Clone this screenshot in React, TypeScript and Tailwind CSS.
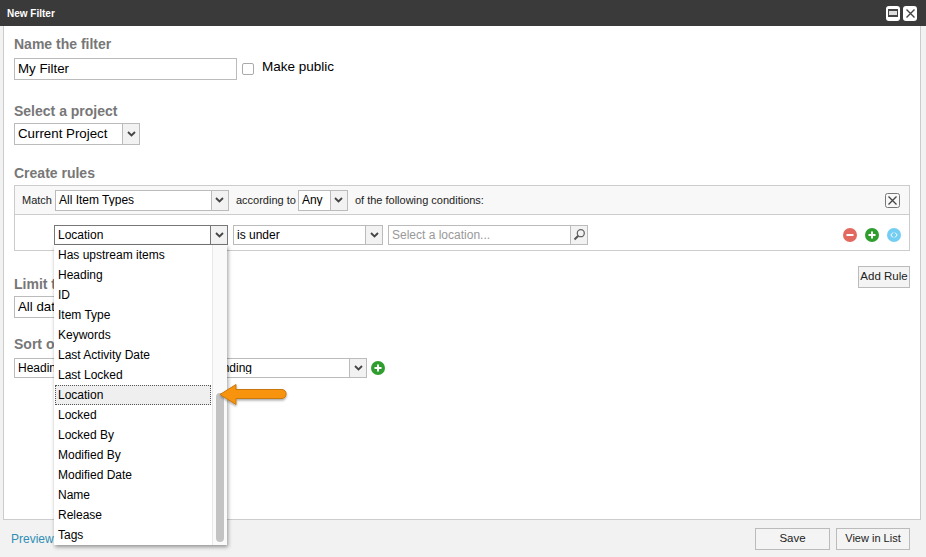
import React from 'react';

const items = [
	'Has upstream items',
	'Heading',
	'ID',
	'Item Type',
	'Keywords',
	'Last Activity Date',
	'Last Locked',
	'Location',
	'Locked',
	'Locked By',
	'Modified By',
	'Modified Date',
	'Name',
	'Release',
	'Tags',
];

function Chevron() {
	return (
		<svg width="9" height="6" viewBox="0 0 9 6">
			<path d="M1 1l3.5 3.5L8 1" fill="none" stroke="#444" strokeWidth="1.8" />
		</svg>
	);
}

function Select({ label, className, textClass = 'text-[12px]', focus = false }: { label: string; className: string; textClass?: string; focus?: boolean }) {
	return (
		<div className={`flex bg-white border ${focus ? 'border-[#777]' : 'border-[#bbb]'} ${className}`}>
			<span className={`flex-1 pl-[3px] text-black leading-none self-center whitespace-nowrap overflow-hidden ${textClass}`}>{label}</span>
			<span className={`w-[17px] flex items-center justify-center bg-[#f2f2f2] border-l ${focus ? 'border-[#777]' : 'border-[#bbb]'}`}>
				<Chevron />
			</span>
		</div>
	);
}

function Heading({ children, className }: { children: React.ReactNode; className: string }) {
	return <div className={`text-[14px] leading-[16px] font-bold text-[#777] ${className}`}>{children}</div>;
}

function RoundIcon({ bg, kind }: { bg: string; kind: 'minus' | 'plus' | 'move' }) {
	return (
		<span className={`w-[14px] h-[14px] rounded-full flex items-center justify-center ${bg}`}>
			<svg width="10" height="10" viewBox="0 0 10 10">
				{kind === 'minus' && <path d="M1.5 5h7" stroke="#fff" strokeWidth="2" />}
				{kind === 'plus' && <path d="M1.5 5h7M5 1.5v7" stroke="#fff" strokeWidth="2" />}
				{kind === 'move' && <path d="M4 2.5L1.8 5 4 7.5M6 2.5L8.2 5 6 7.5" stroke="#fff" strokeWidth="1" fill="none" />}
			</svg>
		</span>
	);
}

export default function App() {
	return (
		<div className="relative w-[926px] h-[557px] overflow-hidden bg-[#f2f2f2] font-['Liberation_Sans',Arial,sans-serif]">
			<div className="h-[26px] bg-[#3a3a3a] flex items-center justify-between pl-[7px] pr-[9px]">
				<span className="text-[10px] font-bold text-white">New Filter</span>
				<div className="flex gap-[3px]">
					<span className="w-[14px] h-[15px] bg-white rounded-[3px] flex items-center justify-center">
						<span className="w-[10px] h-[8px] border border-[#444] border-t-[2px] border-b-[2px] bg-[#ddd]" />
					</span>
					<span className="w-[14px] h-[15px] bg-white rounded-[3px] flex items-center justify-center">
						<svg width="11" height="11" viewBox="0 0 11 11">
							<path d="M1.5 1.5l8 8M9.5 1.5l-8 8" stroke="#444" strokeWidth="1.4" />
						</svg>
					</span>
				</div>
			</div>

			<div className="ml-[3px] mr-[5px] h-[494px] bg-white border border-t-0 border-[#ccc] pl-[10px] pr-[10px] pt-[10px]">
				<Heading className="mb-[5px]">Name the filter</Heading>
				<div className="flex items-center h-[23px]">
					<div className="w-[223px] h-[22px] border border-[#bbb] pl-[3px] flex items-center text-[13.3px] text-black">My Filter</div>
					<span className="ml-[5px] w-[12px] h-[12px] border border-[#aaa] rounded-[2px]" />
					<span className="ml-[8px] text-[13.5px] text-black -mt-[2px]">Make public</span>
				</div>

				<Heading className="mt-[23px] mb-[4px]">Select a project</Heading>
				<Select label="Current Project" className="w-[126px] h-[22px]" textClass="text-[13.3px]" />

				<Heading className="mt-[20px] mb-[4px]">Create rules</Heading>
				<div className="border border-[#ccc]">
					<div className="h-[29px] bg-[#f8f8f8] border-b border-[#ccc] flex items-center pl-[7px] pr-[9px] text-[11px] text-[#222]">
						<span>Match</span>
						<Select label="All Item Types" className="ml-[3px] w-[174px] h-[21px]" textClass="text-[12px]" />
						<span className="ml-[7px]">according to</span>
						<Select label="Any" className="ml-[2px] w-[50px] h-[21px]" textClass="text-[12px]" />
						<span className="ml-[7px]">of the following conditions:</span>
						<svg className="ml-auto" width="15" height="15" viewBox="0 0 15 15">
							<rect x="0.5" y="0.5" width="14" height="14" rx="2" fill="#f8f8f8" stroke="#777" />
							<path d="M3.5 3.5l8 8M11.5 3.5l-8 8" stroke="#444" strokeWidth="1.3" />
						</svg>
					</div>
					<div className="h-[35px] flex items-center pl-[39px] pr-[8px] pt-[4px]">
						<Select label="Location" className="w-[174px] h-[20px]" focus />
						<Select label="is under" className="ml-[5px] w-[150px] h-[20px]" />
						<div className="ml-[5px] w-[200px] h-[20px] flex border border-[#bbb] bg-white">
							<span className="flex-1 pl-[3px] self-center text-[12px] leading-none text-[#999]">Select a location...</span>
							<span className="w-[17px] flex items-center justify-center bg-[#f2f2f2] border-l border-[#bbb]">
								<svg width="13" height="13" viewBox="0 0 13 13">
									<circle cx="7.8" cy="5.2" r="3.5" fill="none" stroke="#666" strokeWidth="1.3" />
									<path d="M5.3 7.8L1.5 11.5" stroke="#555" strokeWidth="2" />
								</svg>
							</span>
						</div>
						<div className="ml-auto flex gap-[8px]">
							<RoundIcon bg="bg-[#e2695f]" kind="minus" />
							<RoundIcon bg="bg-[#2f9e2f]" kind="plus" />
							<RoundIcon bg="bg-[#74cdf2]" kind="move" />
						</div>
					</div>
				</div>

				<div className="flex justify-end mt-[15px]">
					<span className="w-[52px] h-[22px] bg-[#f4f4f4] border border-[#bbb] flex items-center justify-center text-[11.5px] text-[#222]">Add Rule</span>
				</div>

				<Heading className="-mt-[12px] mb-[4px]">Limit to</Heading>
				<Select label="All dates" className="w-[126px] h-[22px]" textClass="text-[13.3px]" />

				<Heading className="mt-[18px] mb-[6px]">Sort on</Heading>
				<div className="flex items-center h-[20px]">
					<Select label="Heading" className="w-[173px] h-[20px]" />
					<Select label="Ascending" className="ml-[5px] w-[175px] h-[20px]" />
					<span className="ml-[4px]"><RoundIcon bg="bg-[#2f9e2f]" kind="plus" /></span>
				</div>
			</div>

			<div className="h-[37px] flex items-center pl-[11px] pr-[16px] text-[12px]">
				<span className="text-[#2f8fb5]">Preview :</span>
				<span className="ml-auto w-[75px] h-[22px] bg-[#f4f4f4] border border-[#bbb] flex items-center justify-center text-[11.5px] text-[#222]">Save</span>
				<span className="ml-[6px] w-[74px] h-[22px] bg-[#f4f4f4] border border-[#bbb] flex items-center justify-center text-[11px] text-[#222]">View in List</span>
			</div>

			{/* open dropdown lies over the form */}
			<div className="absolute left-[54px] top-[245px] w-[173px] h-[300px] bg-white flex shadow-[1px_2px_4px_rgba(0,0,0,0.4)]">
				<div className="w-[158px] pl-[1px] pr-[1px]">
					{items.map((item) => (
						<div
							key={item}
							className={`h-[20px] flex items-center text-[12px] text-black whitespace-nowrap ${item === 'Location' ? 'bg-[#efefef] border border-dotted border-[#555] pl-[2px]' : 'pl-[3px]'}`}
						>
							{item}
						</div>
					))}
				</div>
				<div className="flex-1 bg-[#fafafa] border-l border-[#e8e8e8] pt-[148px] pb-[3px] px-[3px]">
					<div className="h-full bg-[#c3c3c3] rounded-[4px]" />
				</div>
			</div>

			{/* callout arrow */}
			<svg className="absolute left-[216px] top-[382px]" width="74" height="28" viewBox="0 0 74 28">
				<defs>
					<filter id="s" x="-20%" y="-20%" width="140%" height="150%">
						<feDropShadow dx="0" dy="1.5" stdDeviation="1.2" floodColor="#000" floodOpacity="0.35" />
					</filter>
				</defs>
				<path
					d="M4 12.5L20 2.5V7.5H66C71.5 7.5 71.5 16.5 66 16.5H20V22.5Z"
					fill="#f7930f"
					stroke="#c9780e"
					strokeWidth="1"
					strokeLinejoin="round"
					filter="url(#s)"
				/>
			</svg>
		</div>
	);
}
